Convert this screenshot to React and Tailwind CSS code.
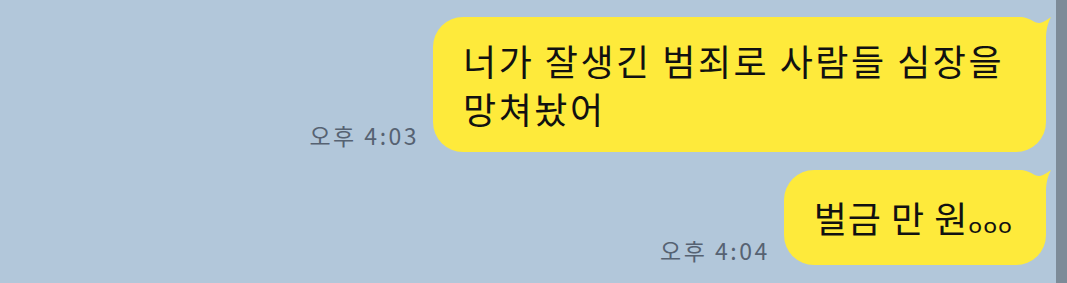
export default function App() {
  const Tail = () => (
    <svg
      className="absolute top-0 right-[-6px]"
      width="40"
      height="40"
      viewBox="0 0 40 40"
      fill="#feea3b"
    >
      <path d="M0,0 L8,0 C18,0 23,7 28,6 C32,5 36,2 39,0 C36,6 34,12 34,22 L34,40 L0,40 Z" />
    </svg>
  );

  const kr = { fontFamily: '"Noto Sans CJK KR", "Noto Sans", sans-serif' };

  return (
    <div className="w-full h-[283px] bg-[#b2c7da] flex overflow-hidden">
      <div className="flex-1 flex flex-col items-end pt-[17px] pr-[10px] gap-[18px]">
        <div className="flex items-end gap-[14px]">
          <div
            className="text-[23px] tracking-[2.5px] text-[#566272] mb-[5px] leading-none"
            style={kr}
          >
            오후 4:03
          </div>
          <div className="relative">
            <div
              className="bg-[#feea3b] rounded-[30px] pl-[30px] pr-[42px] pt-[19px] pb-[20px] text-[36px] tracking-[2.5px] leading-[48px] text-[#111111]"
              style={kr}
            >
              너가 잘생긴 범죄로 사람들 심장을
              <br />
              망쳐놨어
            </div>
            <Tail />
          </div>
        </div>
        <div className="flex items-end gap-[14px]">
          <div
            className="text-[23px] tracking-[2.5px] text-[#566272] mb-[3px] leading-none"
            style={kr}
          >
            오후 4:04
          </div>
          <div className="relative">
            <div
              className="bg-[#feea3b] rounded-[30px] pl-[30px] pr-[33px] pt-[23px] pb-[20px] text-[36px] tracking-[1px] leading-[48px] text-[#111111]"
              style={kr}
            >
              벌금 만 원
              <span
                className="tracking-[0px]"
                style={{ fontFamily: '"DejaVu Sans", sans-serif' }}
              >
                ₒₒₒ
              </span>
            </div>
            <Tail />
          </div>
        </div>
      </div>
      <div className="w-[11px] h-full bg-[#7d8b98]" />
    </div>
  );
}
